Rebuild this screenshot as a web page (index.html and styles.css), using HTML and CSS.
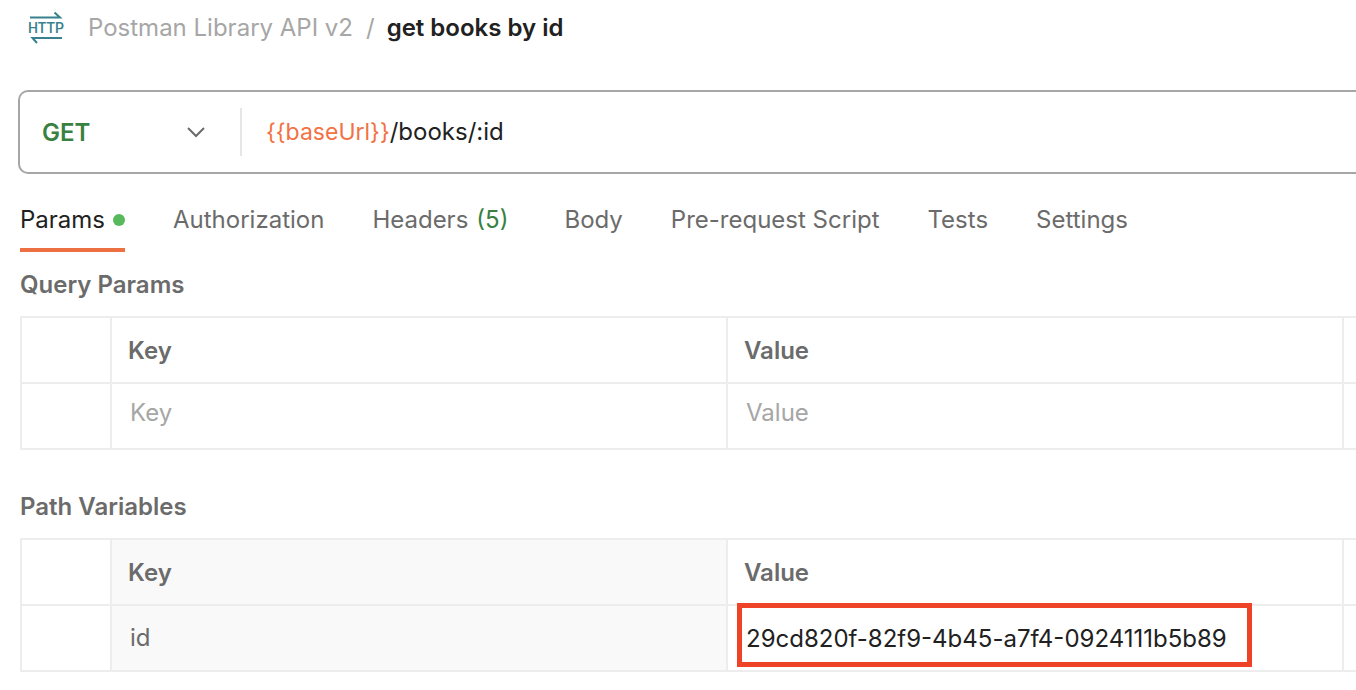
FILE: index.html
```html
<!DOCTYPE html>
<html lang="en">
<head>
<meta charset="utf-8">
<title>get books by id</title>
<link rel="stylesheet" href="styles.css">
</head>
<body>
<header class="crumbs">
  <svg class="http" viewBox="0 0 36 34" width="36" height="34">
    <path d="M2 6.500H32L26.500 1.500M34 27H4.500L9 32" fill="none" stroke="#36818d" stroke-width="2"/>
    <text class="http-text" x="18" y="22" text-anchor="middle">HTTP</text>
  </svg>
  <a class="collection" href="#">Postman Library API v2</a>
  <span class="slash">/</span>
  <h1 class="name">get books by id</h1>
</header>
<main>
  <div class="bar">
    <div class="method">
      <select class="select" aria-label="Method"><option>GET</option><option>POST</option></select>
      <svg class="chevron" viewBox="0 0 20 12" width="20" height="12"><path d="M2 2L10 10L18 2" fill="none" stroke="#6b6b6b" stroke-width="2"/></svg>
    </div>
    <div class="url"><span class="var">{{baseUrl}}</span>/books/:id</div>
  </div>
  <nav class="tabs">
    <button class="tab active">Params<span class="dot"></span></button>
    <button class="tab">Authorization</button>
    <button class="tab headers">Headers <span class="count">(5)</span></button>
    <button class="tab">Body</button>
    <button class="tab">Pre-request Script</button>
    <button class="tab">Tests</button>
    <button class="tab">Settings</button>
  </nav>
  <section class="section">
    <h2 class="title">Query Params</h2>
    <table class="grid">
      <colgroup><col class="c-check"><col class="c-main"><col class="c-main"><col></colgroup>
      <tr><th></th><th>Key</th><th>Value</th><th></th></tr>
      <tr class="blank"><td></td><td><input class="field" aria-label="Key" placeholder="Key"></td><td><input class="field" aria-label="Value" placeholder="Value"></td><td></td></tr>
    </table>
  </section>
  <section class="section">
    <h2 class="title">Path Variables</h2>
    <table class="grid locked">
      <colgroup><col class="c-check"><col class="c-main"><col class="c-main"><col></colgroup>
      <tr><th></th><th>Key</th><th>Value</th><th></th></tr>
      <tr><td></td><td class="key">id</td><td class="marked"><input class="field" aria-label="id value" value="29cd820f-82f9-4b45-a7f4-0924111b5b89"><span class="highlight"></span></td><td></td></tr>
    </table>
  </section>
</main>
</body>
</html>
```
FILE: styles.css
```css
* { box-sizing: border-box; }
body { margin: 0; font: 24px/32px Inter, "Liberation Sans", sans-serif; color: #212121; background: #fff; overflow-x: hidden; }
button, input, select { font: inherit; }
.crumbs { display: flex; align-items: center; height: 56px; padding-left: 28px; white-space: nowrap; }
.http { margin-right: 24px; overflow: visible; }
.http-text { font: 500 14px Roboto, "Liberation Sans", sans-serif; fill: #36818d; }
.collection { color: #a6a6a6; text-decoration: none; }
.slash { color: #a6a6a6; margin: 0 12px 0 13px; }
.name { margin: 0; font-size: 24px; font-weight: 600; }
.bar { display: flex; align-items: center; height: 84px; margin: 34px 0 0 18px; border: 2px solid #a6a6a6; border-right: 0; border-radius: 10px 0 0 10px; }
.method { position: relative; width: 222px; height: 48px; border-right: 2px solid #e6e6e6; }
.select { appearance: none; width: 100%; height: 48px; padding: 2px 22px 0; border: 0; background: none; color: #388140; font-weight: 600; }
.chevron { position: absolute; right: 34px; top: 18px; pointer-events: none; }
.url { padding-left: 24px; }
.var { color: #f27244; font-size: 23px; }
.tabs { display: flex; gap: 48px; margin: 26px 0 0 20px; height: 52px; }
.tab { display: flex; align-items: flex-start; height: 52px; padding: 4px 0 0; border: 0; border-bottom: 4px solid transparent; background: none; color: #6b6b6b; white-space: nowrap; }
.active { color: #212121; border-color: #ed7043; }
.dot { width: 12px; height: 12px; margin: 10px 0 0 8px; border-radius: 50%; background: #58b85c; }
.headers { gap: 8px; margin-right: 8px; }
.count { color: #388140; }
.section { padding: 17px 0 0 20px; }
.section + .section { padding-top: 41px; }
.title { margin: 0 0 15px; font-size: 24px; font-weight: 600; color: #6b6b6b; }
.grid { width: 100%; table-layout: fixed; border-collapse: collapse; }
.grid tr { height: 66px; }
.grid th, .grid td { padding: 0 16px; border: 2px solid #ededed; text-align: left; color: #6b6b6b; }
.grid th { padding-top: 2px; font-weight: 600; }
.grid td { padding: 0 18px; }
.grid .blank td { padding-bottom: 8px; }
.grid th:last-child, .grid td:last-child { padding: 0; border-right: 0; }
.c-check { width: 90px; }
.c-main { width: 616px; }
.field { display: block; width: 100%; height: 36px; padding: 0; border: 0; background: none; color: #212121; outline: 0; }
.field::placeholder { color: #a6a6a6; opacity: 1; }
.locked th:nth-child(2), .locked .key { background: #f9f9f9; }
.grid .marked { position: relative; }
.highlight { position: absolute; left: 9px; top: -3px; width: 515px; height: 64px; border: 5px solid #ee4326; pointer-events: none; }
```
